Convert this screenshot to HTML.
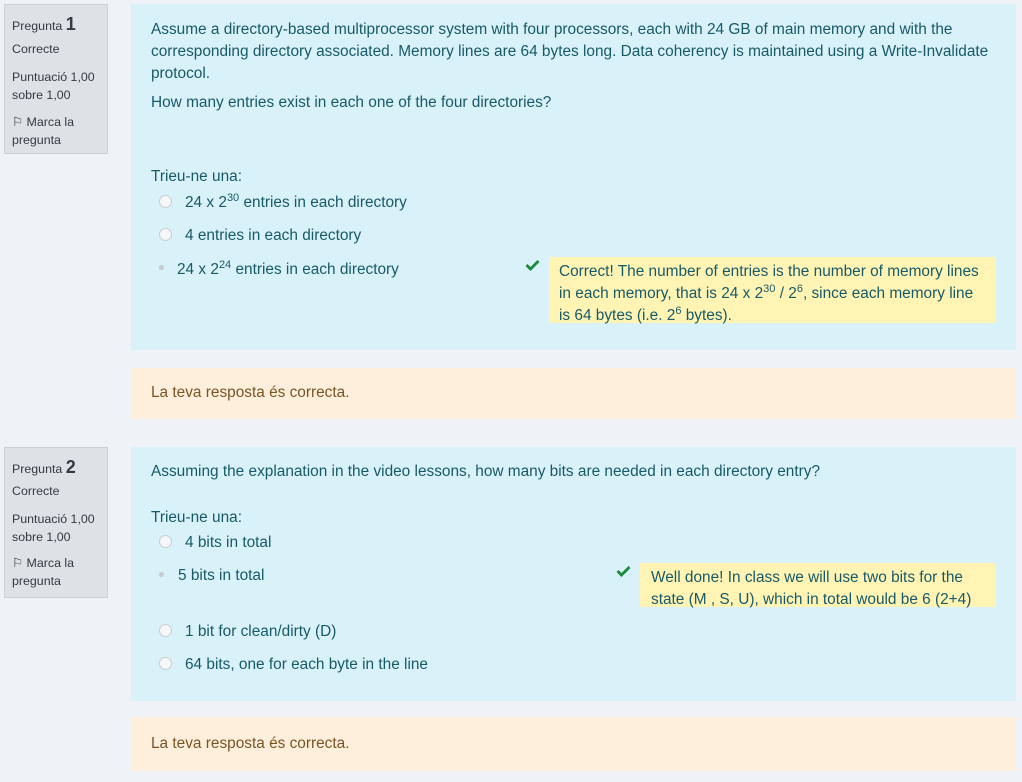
<!DOCTYPE html>
<html><head><meta charset="utf-8"><style>
body{margin:0;width:1022px;height:782px;background:#eff3f8;font-family:"Liberation Sans",sans-serif;position:relative;overflow:hidden}
.a{position:absolute;white-space:nowrap}
.side{position:absolute;left:4px;width:102px;background:#dee2e6;border:1px solid #ccd1d6;color:#343a40;font-size:12.4px}
.side div{position:absolute;left:7px;white-space:nowrap}
.box{position:absolute;left:131px;width:885px;background:#d9f1f8}
.fb{position:absolute;left:131px;width:885px;background:#fdefdb;color:#7a5424;font-size:15.4px}
.t{color:#175a68;font-size:15.4px}
.r{position:absolute;width:11px;height:11px;border:1px solid #c9cdd1;border-radius:50%;background:#f5f7f8}
.d{position:absolute;width:5px;height:5px;border-radius:50%;background:#c5cbcf}
.y{position:absolute;background:#fff4b4}
sup{font-size:11px;line-height:0}
.ck{position:absolute}
</style></head><body>
<div class="side" style="top:4px;height:148px">
<div style="top:9px">Pregunta <b style="font-size:18px">1</b></div>
<div style="top:37px">Correcte</div>
<div style="top:63px;line-height:18px">Puntuació 1,00<br>sobre 1,00</div>
<div style="top:108px;line-height:18px">⚐ Marca la<br>pregunta</div>
</div>
<div class="box" style="top:4px;height:346px"></div>
<div class="a t" style="left:151px;top:19px;line-height:22px">Assume a directory-based multiprocessor system with four processors, each with 24 GB of main memory and with the<br>corresponding directory associated. Memory lines are 64 bytes long. Data coherency is maintained using a Write-Invalidate<br>protocol.</div>
<div class="a t" style="left:151px;top:94px">How many entries exist in each one of the four directories?</div>
<div class="a t" style="left:151px;top:168px">Trieu-ne una:</div>
<div class="r" style="left:159px;top:195px"></div>
<div class="a t" style="left:185px;top:194px">24 x 2<sup>30</sup> entries in each directory</div>
<div class="r" style="left:159px;top:228px"></div>
<div class="a t" style="left:185px;top:227px">4 entries in each directory</div>
<div class="d" style="left:159px;top:265px"></div>
<div class="a t" style="left:177px;top:261px">24 x 2<sup>24</sup> entries in each directory</div>
<svg class="ck" style="left:525px;top:259px" width="15" height="12" viewBox="0 0 15 12"><path d="M1.5 6 L5.5 10 L13.5 2" stroke="#1a8a3a" stroke-width="2.8" fill="none"/></svg>
<div class="y" style="left:549px;top:257px;width:447px;height:66px"></div>
<div class="a t" style="left:559px;top:261px;line-height:22px">Correct! The number of entries is the number of memory lines<br>in each memory, that is 24 x 2<sup>30</sup> / 2<sup>6</sup>, since each memory line<br>is 64 bytes (i.e. 2<sup>6</sup> bytes).</div>
<div class="fb" style="top:368px;height:51px"><span class="a" style="left:20px;top:16px">La teva resposta és correcta.</span></div>

<div class="side" style="top:447px;height:149px">
<div style="top:9px">Pregunta <b style="font-size:18px">2</b></div>
<div style="top:36px">Correcte</div>
<div style="top:62px;line-height:18px">Puntuació 1,00<br>sobre 1,00</div>
<div style="top:106px;line-height:18px">⚐ Marca la<br>pregunta</div>
</div>
<div class="box" style="top:447px;height:254px"></div>
<div class="a t" style="left:151px;top:463px">Assuming the explanation in the video lessons, how many bits are needed in each directory entry?</div>
<div class="a t" style="left:151px;top:509px">Trieu-ne una:</div>
<div class="r" style="left:159px;top:535px"></div>
<div class="a t" style="left:185px;top:534px">4 bits in total</div>
<div class="d" style="left:159px;top:572px"></div>
<div class="a t" style="left:178px;top:567px">5 bits in total</div>
<svg class="ck" style="left:616px;top:565px" width="15" height="12" viewBox="0 0 15 12"><path d="M1.5 6 L5.5 10 L13.5 2" stroke="#1a8a3a" stroke-width="2.8" fill="none"/></svg>
<div class="y" style="left:640px;top:563px;width:356px;height:44px"></div>
<div class="a t" style="left:651px;top:567px;line-height:22px">Well done! In class we will use two bits for the<br>state (M , S, U), which in total would be 6 (2+4)</div>
<div class="r" style="left:159px;top:624px"></div>
<div class="a t" style="left:185px;top:623px">1 bit for clean/dirty (D)</div>
<div class="r" style="left:159px;top:657px"></div>
<div class="a t" style="left:185px;top:656px">64 bits, one for each byte in the line</div>
<div class="fb" style="top:717px;height:54px"><span class="a" style="left:20px;top:18px">La teva resposta és correcta.</span></div>
</body></html>
